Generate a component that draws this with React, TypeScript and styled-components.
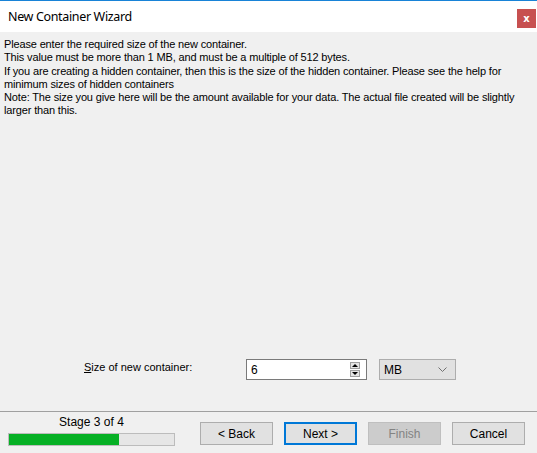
import { createGlobalStyle, styled } from "styled-components";

const GlobalStyle = createGlobalStyle`
    html, body {
        margin: 0;
        padding: 0;
        background: #f0f0f0;
    }
    * {
        box-sizing: border-box;
    }
`

const Window = styled.div`
    width: 537px;
    height: 453px;
    display: flex;
    flex-direction: column;
    background: #f0f0f0;
    border-top: 1px solid #1883d7;
    font-family: "Liberation Sans", Arial, sans-serif;
    font-size: 11px;
    color: #000;
    overflow: hidden;
`

const TitleBar = styled.div`
    height: 31px;
    background: #fff;
    display: flex;
    align-items: center;
    justify-content: space-between;
    padding: 0 1px 0 8px;
`

const Title = styled.span`
    font-family: "Noto Sans", "Open Sans", sans-serif;
    font-size: 12.5px;
    letter-spacing: -0.35px;
    color: #000;
`

const CloseButton = styled.button`
    width: 19px;
    height: 19px;
    margin-top: 4px;
    border: none;
    background: #c75050;
    color: #fff;
    font-family: "DejaVu Sans", sans-serif;
    font-weight: bold;
    font-size: 10px;
    padding: 0;
    display: flex;
    align-items: center;
    justify-content: center;
`

const Body = styled.div`
    flex: 1;
    display: flex;
    flex-direction: column;
    padding: 6px 4px 31px;
`

const Instructions = styled.div`
    line-height: 13.3px;
    letter-spacing: -0.15px;
`

const FormRow = styled.div`
    margin-top: auto;
    display: flex;
    align-items: center;
    padding-left: 80px;
    height: 21px;
`

const Label = styled.label`
    width: 162px;
    margin-top: -6px;

    u {
        text-decoration: underline;
    }
`

const SpinBox = styled.div`
    width: 121px;
    height: 21px;
    border: 1px solid #7a7a7a;
    background: #fff;
    display: flex;
    align-items: center;
    padding: 0 6px 0 4px;
    margin-right: 12px;
`

const SpinValue = styled.span`
    flex: 1;
    font-size: 12px;
`

const SpinArrows = styled.div`
    display: flex;
    flex-direction: column;
    gap: 1px;
`

const SpinArrow = styled.div<{ $down?: boolean }>`
    width: 10px;
    height: 7px;
    background: #e5e5e5;
    border: 1px solid #a0a0a0;
    display: flex;
    align-items: center;
    justify-content: center;

    &::after {
        content: "";
        border-left: 3px solid transparent;
        border-right: 3px solid transparent;
        ${({ $down }) => $down ? 'border-top: 3px solid #000;' : 'border-bottom: 3px solid #000;'}
    }
`

const Select = styled.div`
    width: 77px;
    height: 21px;
    background: #e1e1e1;
    border: 1px solid #adadad;
    display: flex;
    align-items: center;
    justify-content: space-between;
    padding: 0 8px 0 4px;
    font-size: 12px;
`

const Separator = styled.div`
    height: 1px;
    background: #a0a0a0;
`

const Footer = styled.div`
    height: 41px;
    display: flex;
    align-items: flex-start;
    padding: 0 12px 0 8px;
`

const Stage = styled.div`
    width: 167px;
    display: flex;
    flex-direction: column;
    align-items: center;
    gap: 4px;
    padding-top: 4px;
`

const StageText = styled.span`
    font-size: 12px;
    line-height: 13px;
`

const ProgressTrack = styled.div`
    width: 100%;
    height: 13px;
    background: #e6e6e6;
    border: 1px solid #bcbcbc;
`

const ProgressFill = styled.div`
    height: 100%;
    background: #06b025;
`

const Buttons = styled.div`
    margin-left: auto;
    margin-top: 10px;
    display: flex;
    gap: 11px;
`

const Button = styled.button<{ $default?: boolean }>`
    width: 73px;
    height: 23px;
    background: #e1e1e1;
    border: ${({ $default }) => $default ? '2px solid #0078d7' : '1px solid #adadad'};
    font-family: "Liberation Sans", Arial, sans-serif;
    font-size: 12px;
    color: #000;
    padding: 0;

    &:disabled {
        background: #cccccc;
        border-color: #bfbfbf;
        color: #838383;
    }
`

export default function App() {
    const stage = 3;
    const stages = 4;
    const progress = ((stage - 1) / (stages - 1)) * 100;

    return (
        <>
            <GlobalStyle />
            <Window>
                <TitleBar>
                    <Title>New Container Wizard</Title>
                    <CloseButton>x</CloseButton>
                </TitleBar>
                <Body>
                    <Instructions>
                        Please enter the required size of the new container.<br />
                        This value must be more than 1 MB, and must be a multiple of 512 bytes.<br />
                        If you are creating a hidden container, then this is the size of the hidden container. Please see the help for minimum sizes of hidden containers<br />
                        Note: The size you give here will be the amount available for your data. The actual file created will be slightly larger than this.
                    </Instructions>
                    <FormRow>
                        <Label><u>S</u>ize of new container:</Label>
                        <SpinBox>
                            <SpinValue>6</SpinValue>
                            <SpinArrows>
                                <SpinArrow />
                                <SpinArrow $down />
                            </SpinArrows>
                        </SpinBox>
                        <Select>
                            <span>MB</span>
                            <svg width="9" height="5" viewBox="0 0 9 5">
                                <path d="M0.5 0.5 L4.5 4.5 L8.5 0.5" fill="none" stroke="#707070" strokeWidth="1" />
                            </svg>
                        </Select>
                    </FormRow>
                </Body>
                <Separator />
                <Footer>
                    <Stage>
                        <StageText>Stage {stage} of {stages}</StageText>
                        <ProgressTrack>
                            <ProgressFill style={{ width: `${progress}%` }} />
                        </ProgressTrack>
                    </Stage>
                    <Buttons>
                        <Button>&lt; Back</Button>
                        <Button $default>Next &gt;</Button>
                        <Button disabled>Finish</Button>
                        <Button>Cancel</Button>
                    </Buttons>
                </Footer>
            </Window>
        </>
    );
}
